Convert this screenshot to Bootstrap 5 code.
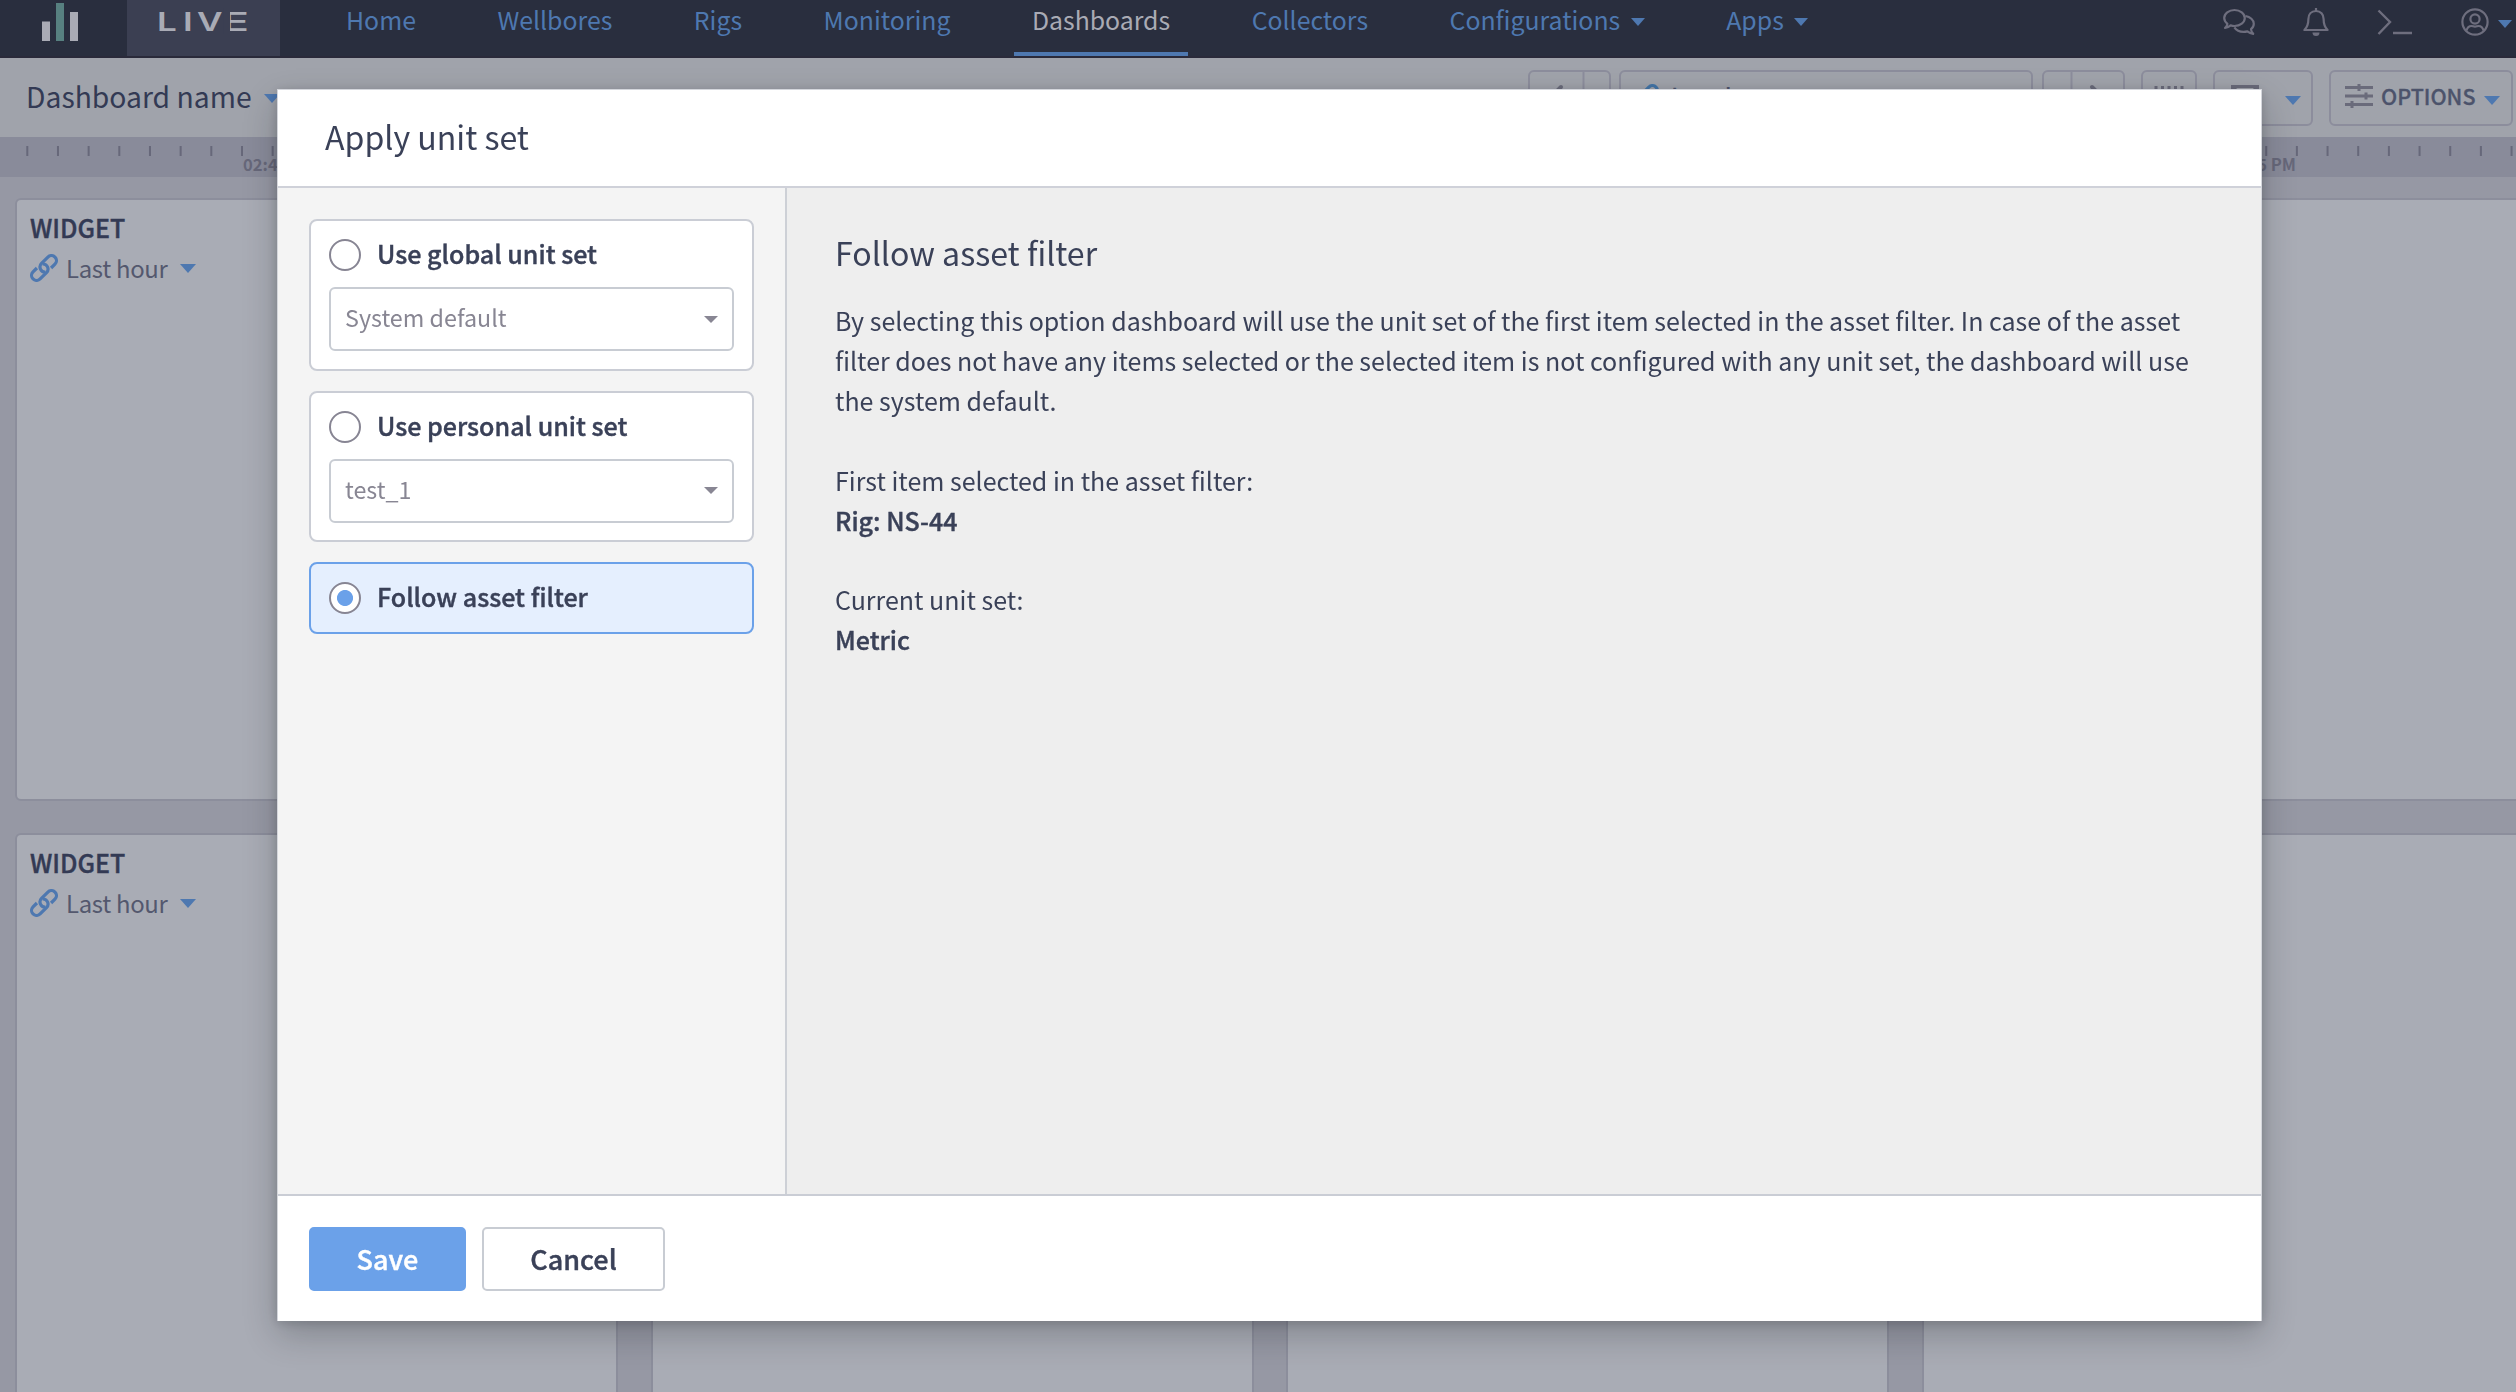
<!DOCTYPE html>
<html lang="en">
<head>
<meta charset="utf-8">
<meta name="viewport" content="width=device-width, initial-scale=1">
<title>Dashboards</title>
<link href="https://cdn.jsdelivr.net/npm/bootstrap@5.3.0/dist/css/bootstrap.min.css" rel="stylesheet">
<script src="https://cdn.jsdelivr.net/npm/bootstrap@5.3.0/dist/js/bootstrap.bundle.min.js"></script>
<style>
  body { font-family: "Noto Sans CJK SC", "Noto Sans", sans-serif; font-size: 25px; color: #333a50; background: #9698a4; height: 1392px; overflow: hidden; }
  svg { display: block; flex: none; }
  .caret { width: 0; height: 0; flex: none; border: 8px solid transparent; border-bottom-width: 0; border-top: 9px solid #4e78b0; }

  .topbar { height: 58px; background: #292e3e; border-bottom: 2px solid #2a2a3a; }
  .brand-mark { width: 127px; }
  .brand-live { width: 153px; height: 56px; background: #3b3f52; }
  .main-nav { gap: 45.5px; margin-left: 48px; }
  .main-nav .nav-link { height: 56px; padding: 0 18px; font-size: 24.85px; line-height: 39.5px; color: #4e78b0; border-bottom: 4px solid transparent; display: flex; gap: 10.5px; align-items: flex-start; border-radius: 0; }
  .main-nav .nav-link.active { color: #a9abb5; border-color: #4e78b0; }
  .main-nav .caret { margin-top: 18px; border-width: 8px 7px 0; }
  .top-icons { color: #6e6e7e; height: 43px; gap: 48px; }
  .top-icons .user-menu { gap: 9px; margin-right: 4px; }
  .top-icons .caret { border-width: 8px 7px 0; margin-top: 5px; }

  .toolbar { height: 79px; background: #a0a3ab; padding: 12px 3px 0 26px; }
  .dash-title { font-size: 28.3px; line-height: 51px; color: #333a54; }
  .tool { height: 56px; border: 2px solid #8c8d9c; border-radius: 6px; color: #6a6b7b; display: flex; align-items: center; }
  .step-tool { width: 83px; }
  .range-tool { width: 414px; margin-left: 8px; padding-left: 10px; }
  .tool-text { font-size: 21.5px; font-weight: 500; color: #4c536b; line-height: 46px; margin-bottom: 4px; -webkit-text-stroke: .3px; }
  .range-tool .tool-text { font-size: 25px; font-weight: 400; }

  .ruler { height: 40px; background: #898b9a; padding: 15px 220px 0 243px; font-size: 16.6px; font-weight: 700; line-height: 25px; color: #67687a; position: relative; }
  .ruler svg { position: absolute; left: 0; top: 9px; }

  .board { padding: 21px 0 0 15px; display: grid; grid-template-columns: repeat(4, 603px); grid-auto-rows: 603px; gap: 32px 32.5px; background: #9698a4; }
  .widget { background: #a9acb5; border: 2px solid #8c8e9c; border-radius: 6px; padding: 12px 13px; }
  .widget h2 { font-size: 25px; font-weight: 500; line-height: 31px; margin: 0; color: #333a54; -webkit-text-stroke: .4px; }
  .last-hour { font-size: 23.9px; letter-spacing: -.3px; line-height: 50px; color: #54586e; }

  .unit-dialog { max-width: none; width: 1985px; margin: 89px 0 0 277px; }
  .unit-dialog .modal-content { height: 1232px; border: 1px solid #d4d6dc; border-bottom: 0; border-radius: 0; box-shadow: 0 14px 32px rgba(16,22,26,.24), 0 2px 10px rgba(16,22,26,.16); color: #3a4158; background: #fff; }
  .unit-dialog .modal-header { height: 98px; padding: 0 47px 4px; border-bottom: 2px solid #cfd1d9; border-radius: 0; }
  .unit-dialog .modal-title { font-size: 32.1px; line-height: 48px; }
  .side-pane { width: 509px; border-right: 2px solid #cdd0d6; background: #f4f4f4; padding: 31px; gap: 20px; }
  .choice { border: 2px solid #cacdd5; border-radius: 8px; background: #fff; padding: 18px; height: 151.5px; }
  .choice.picked { background: #e5effe; border-color: #6ba1e9; height: 72px; }
  .choice .form-check-input { width: 32px; height: 32px; margin: 0; border: 2px solid #878593; background: #fff; }
  .choice .form-check-input:checked { background: radial-gradient(circle, #6ba1e9 7.6px, #fff 8.4px); }
  .choice label { font-size: 25.05px; font-weight: 500; line-height: 29px; margin-left: 16px; -webkit-text-stroke: .4px; }
  .picker { height: 64px; border: 2px solid #c8ccd3; border-radius: 6px; margin-top: 16px; padding: 0 14px; font-size: 23.3px; color: #888693; }
  .picker span:first-child { margin-bottom: 3px; }
  .picker .caret { border-width: 7px 7px 0; border-top-color: #888693; }
  .detail { background: #eee; padding: 40px 60px 0 48px; line-height: 39.85px; }
  .detail h3 { font-size: 32.1px; font-weight: 400; line-height: 48px; margin: 0 0 25.4px; }
  .detail p { margin: 0 0 39.85px; }
  .detail strong { font-weight: 500; -webkit-text-stroke: .4px; }
  .unit-dialog .modal-footer { height: 127px; padding: 0 31px 0; gap: 16px; border-top: 2px solid #cacdd5; border-radius: 0; }
  .unit-dialog .btn { height: 64px; margin: 0; padding: 0; font-size: 27px; font-weight: 500; line-height: 58px; border: 2px solid #c8ccd3; border-radius: 5px; color: #3a4158; -webkit-text-stroke: .4px; }
  .unit-dialog .btn-primary { width: 157px; background: #6ba1e9; border-color: #6ba1e9; color: #fff; }
  .unit-dialog .btn-light { width: 183px; }
</style>
</head>
<body>
<svg width="0" height="0" class="position-absolute">
  <symbol id="chain" viewBox="0 0 28 28">
    <g transform="translate(14 14) rotate(-45)" fill="none" stroke-width="3.200">
      <path id="chain-half" d="M5 5h5.500a5 5 0 0 0 0-10H1.500a5 5 0 0 0-3.300 8.800"/>
      <use href="#chain-half" transform="rotate(180)"/>
    </g>
  </symbol>
</svg>
<header class="topbar d-flex">
  <div class="brand-mark">
    <svg width="127" height="56"><path fill="#a9abb5" d="M42 21.500h8V41h-8zM70 12h8v29h-8z"/><path fill="#578080" d="M56 3h8v38h-8z"/></svg>
  </div>
  <div class="brand-live">
    <svg width="153" height="56" font-family="Inter, sans-serif" font-size="26" font-weight="600" fill="#a9abb5"><text transform="scale(1.350 1)" x="22.200 41.500 51.800" y="31">LIV</text><text transform="scale(1.750 1)" x="54" y="31">E</text><path fill="#3b3f52" d="M96.500 8h6.500v26h-6.500z"/></svg>
  </div>
  <nav class="nav main-nav flex-nowrap">
    <a class="nav-link" href="#">Home</a>
    <a class="nav-link" href="#">Wellbores</a>
    <a class="nav-link" href="#">Rigs</a>
    <a class="nav-link" href="#">Monitoring</a>
    <a class="nav-link active" href="#">Dashboards</a>
    <a class="nav-link" href="#">Collectors</a>
    <a class="nav-link" href="#">Configurations<span class="caret"></span></a>
    <a class="nav-link" href="#">Apps<span class="caret"></span></a>
  </nav>
  <div class="top-icons d-flex align-items-center ms-auto">
    <svg width="32" height="28" viewBox="0 0 32 28" fill="none" stroke="currentColor" stroke-width="2.200" stroke-linejoin="round"><path d="M2 20c1.600-1.500 2.300-3 2.400-4.200C2.300 14 1.200 12 1.200 10 1.200 5.600 5.800 2 11.500 2s10.300 3.600 10.300 8-4.600 8-10.300 8c-1.400 0-2.700-.2-3.900-.6C6 18.800 4.200 19.800 2 20z"/><path d="M22.500 8c4.700.8 8.300 4 8.300 7.800 0 2.200-1 4-2.800 5.400.1 1.500.8 3 2.200 4.600-2.300-.2-4.200-1-5.800-2.400-1.200.3-2.400.5-3.700.5-4 0-7.600-1.800-9.300-4.500"/></svg>
    <svg width="26" height="30" viewBox="0 0 26 30" fill="none" stroke="currentColor" stroke-width="2.200" stroke-linejoin="round"><path d="M13 1v3M13 4c-4.700 0-7.600 3.400-7.600 8 0 6-1.400 8.500-4 11h23.200c-2.600-2.500-4-5-4-11 0-4.600-2.900-8-7.600-8z"/><path fill="currentColor" stroke="none" d="M9.500 25.500h7a3.500 3.500 0 0 1-7 0z"/></svg>
    <svg width="36" height="28" viewBox="0 0 36 28" fill="none" stroke="currentColor" stroke-width="2.400"><path d="M1.500 2.500 13 14 1.500 26M16 25h19"/></svg>
    <div class="user-menu d-flex align-items-center">
      <svg width="28" height="28" viewBox="0 0 28 28" fill="none" stroke="currentColor" stroke-width="2.200"><circle cx="14" cy="14" r="12.600"/><circle cx="14" cy="11" r="4.600"/><path d="M5.500 22.500c.8-3 2.500-4.500 5-4.500 1.200 0 2 .7 3.500.7s2.300-.7 3.500-.7c2.500 0 4.200 1.500 5 4.500"/></svg>
      <span class="caret"></span>
    </div>
  </div>
</header>

<div class="toolbar d-flex align-items-start">
  <div class="dash-title">Dashboard name</div><span class="caret ms-2 mt-4" style="margin-left:12px!important"></span>
  <div class="tool step-tool ms-auto"><svg width="79" height="52"><path d="M53.500 0v52" stroke="#8c8d9c" stroke-width="2"/><path d="M31 15 20 26l11 11" fill="none" stroke="currentColor" stroke-width="4" stroke-linecap="round"/></svg></div>
  <div class="tool range-tool">
    <svg width="28" height="28" stroke="#4375a8"><use href="#chain"/></svg>
    <span class="tool-text ms-2 ps-1">Last hour</span>
  </div>
  <div class="tool step-tool" style="margin-left:9px"><svg width="79" height="52"><path d="M27.500 0v52" stroke="#8c8d9c" stroke-width="2"/><path d="m48 15 11 11-11 11" fill="none" stroke="currentColor" stroke-width="4" stroke-linecap="round"/></svg></div>
  <div class="tool ms-3" style="width:56px"><svg width="52" height="52"><path d="M13 14v24M19.500 14v24M26 14v24M32.500 14v24M39 14v24" stroke="currentColor" stroke-width="3"/></svg></div>
  <div class="tool ms-3 ps-3" style="width:100px"><svg width="28" height="26" fill="none" stroke="currentColor" stroke-width="3"><path d="M1.500 1.500h25v23h-25zM1.500 2 14 13 26.500 2"/></svg><span class="caret ms-auto mt-1" style="margin-right:10px"></span></div>
  <div class="tool ms-3" style="width:184px;padding:0 11px 0 14px">
    <svg class="mb-1" width="28" height="26" fill="none" stroke="currentColor" stroke-width="3"><path d="M0 4.500h28M0 13h28M0 21.500h28M14 1v7M21 9.500v7M7 18v7"/></svg>
    <span class="tool-text ms-2">OPTIONS</span><span class="caret ms-auto mt-1"></span>
  </div>
</div>

<div class="ruler d-flex justify-content-between">
  <svg width="2516" height="10"><path d="M26.300 5H2516" stroke="#67687a" stroke-width="10" stroke-dasharray="2 28.670"/></svg>
  <span>02:45 PM</span><span>03:45 PM</span>
</div>

<main class="board">
  <section class="widget"><h2>WIDGET</h2>
    <div class="last-hour d-flex align-items-center"><svg width="28" height="28" stroke="#4e78b0"><use href="#chain"/></svg><span class="ms-2 me-2 pe-1">Last hour</span><span class="caret"></span></div></section>
  <section class="widget"></section><section class="widget"></section><section class="widget"></section>
  <section class="widget"><h2>WIDGET</h2>
    <div class="last-hour d-flex align-items-center"><svg width="28" height="28" stroke="#4e78b0"><use href="#chain"/></svg><span class="ms-2 me-2 pe-1">Last hour</span><span class="caret"></span></div></section>
  <section class="widget"></section><section class="widget"></section><section class="widget"></section>
</main>

<div class="modal d-block" tabindex="-1" role="dialog" aria-modal="true">
  <div class="modal-dialog unit-dialog">
    <div class="modal-content">
      <div class="modal-header"><h1 class="modal-title fw-normal">Apply unit set</h1></div>
      <div class="modal-body p-0 d-flex">
        <form class="side-pane d-flex flex-column">
          <div class="choice">
            <div class="d-flex"><input class="form-check-input" type="radio" name="unitset" id="u1"><label for="u1">Use global unit set</label></div>
            <div class="picker d-flex align-items-center justify-content-between"><span>System default</span><span class="caret"></span></div>
          </div>
          <div class="choice">
            <div class="d-flex"><input class="form-check-input" type="radio" name="unitset" id="u2"><label for="u2">Use personal unit set</label></div>
            <div class="picker d-flex align-items-center justify-content-between"><span>test_1</span><span class="caret"></span></div>
          </div>
          <div class="choice picked">
            <div class="d-flex"><input class="form-check-input" type="radio" name="unitset" id="u3" checked><label for="u3">Follow asset filter</label></div>
          </div>
        </form>
        <div class="detail flex-fill">
          <h3>Follow asset filter</h3>
          <p>By selecting this option dashboard will use the unit set of the first item selected in the asset filter. In case of the asset<br>filter does not have any items selected or the selected item is not configured with any unit set, the dashboard will use<br>the system default.</p>
          <p>First item selected in the asset filter:<br><strong>Rig: NS-44</strong></p>
          <p>Current unit set:<br><strong>Metric</strong></p>
        </div>
      </div>
      <div class="modal-footer justify-content-start flex-nowrap">
        <button class="btn btn-primary">Save</button>
        <button class="btn btn-light bg-white">Cancel</button>
      </div>
    </div>
  </div>
</div>
</body>
</html>
